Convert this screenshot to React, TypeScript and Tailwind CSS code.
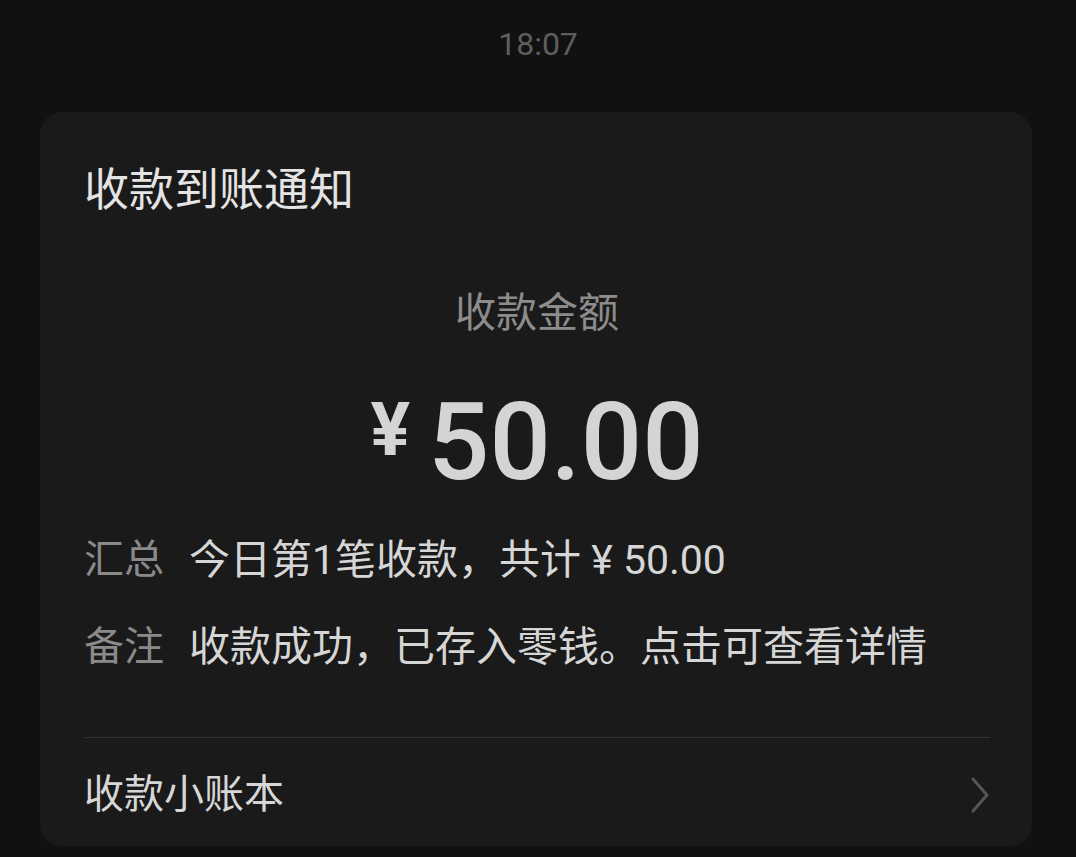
const cjk = "font-['Roboto','Noto_Sans_CJK_SC',sans-serif]";

function InfoRow({ label, value, height }: { label: string; value: string; height: string }) {
  return (
    <div className={`flex items-center ${height}`}>
      <span className="w-[105px] shrink-0 text-[40px] leading-none text-[#8a8a8a]">{label}</span>
      <span className="text-[41px] leading-none text-[#d6d6d6] whitespace-nowrap">{value}</span>
    </div>
  );
}

export default function App() {
  return (
    <div className={`min-h-[857px] w-full bg-[#111111] ${cjk}`}>
      <div className="flex h-[88px] items-center justify-center">
        <span className="text-[32px] leading-none text-[#5e5e5e]">18:07</span>
      </div>

      <div className="ml-[40px] mr-[44px] mt-[24px] rounded-[22px] bg-[#1a1a1a] pl-[44px] pr-[42px]">
        <div className="flex h-[156px] items-center">
          <h1 className="text-[45px] font-normal leading-none text-[#e4e4e4]">收款到账通知</h1>
        </div>

        <div className="flex h-[90px] items-center justify-center">
          <span className="text-[41px] leading-none text-[#8c8c8c]">收款金额</span>
        </div>

        <div className="flex h-[168px] items-center justify-center">
          <div className="flex items-start text-[#d4d4d4]">
            <span className="mr-[18px] mt-[5px] text-[74px] font-bold leading-none">¥</span>
            <span className="text-[108px] font-medium leading-none">50.00</span>
          </div>
        </div>

        <InfoRow label="汇总" value="今日第1笔收款，共计 ¥ 50.00" height="h-[68px]" />
        <InfoRow label="备注" value="收款成功，已存入零钱。点击可查看详情" height="h-[106px]" />

        <div className="mt-[37px] h-px bg-[#333333]" />

        <div className="flex h-[108px] items-center justify-between pt-[5px]">
          <span className="text-[40px] leading-none text-[#d6d6d6]">收款小账本</span>
          <svg width="20" height="36" viewBox="0 0 20 36" fill="none">
            <path d="M3 2 L17 18 L3 34" stroke="#555555" strokeWidth="3" strokeLinecap="round" strokeLinejoin="round" />
          </svg>
        </div>
      </div>
    </div>
  );
}
